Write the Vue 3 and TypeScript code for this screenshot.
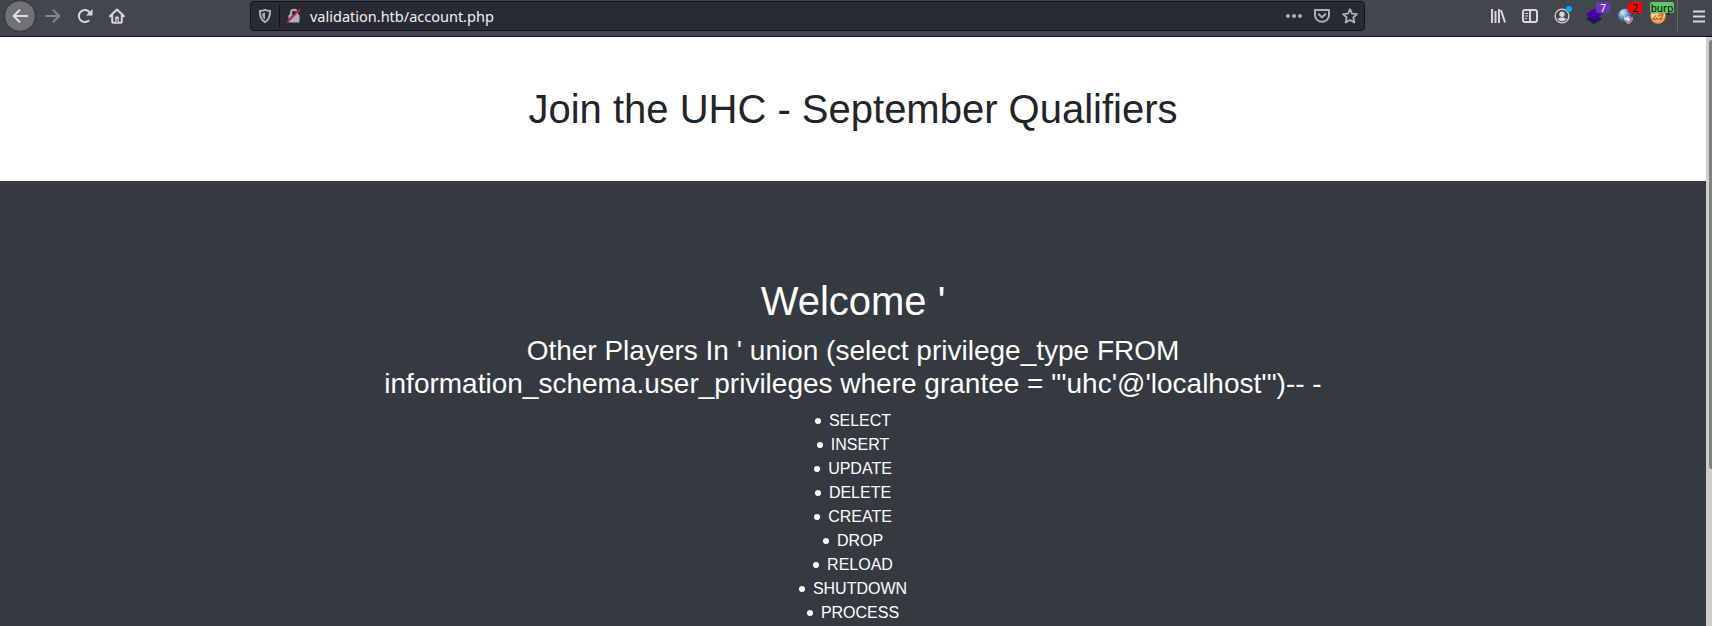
<script setup lang="ts">
const privileges: string[] = [
  'SELECT', 'INSERT', 'UPDATE', 'DELETE', 'CREATE', 'DROP', 'RELOAD', 'SHUTDOWN', 'PROCESS',
]
const team = `' union (select privilege_type FROM information_schema.user_privileges where grantee = "'uhc'@'localhost'")-- -`
</script>

<template>
  <div class="window">
    <header class="toolbar">
      <nav class="nav">
        <button class="back" aria-label="Back">
          <svg width="16" height="16" viewBox="0 0 16 16"><path d="M15 8H2M7.5 2.2 1.6 8l5.9 5.8" /></svg>
        </button>
        <svg class="forward" width="16" height="16" viewBox="0 0 16 16"><path d="M1 8h13M8.5 2.2 14.4 8l-5.9 5.8" /></svg>
        <svg class="reload" width="16" height="16" viewBox="0 0 16 16"><path d="M12.2 12.2A6 6 0 1 1 12.8 4.6" /><path class="fill" d="M15.5 1v6.5H9z" /></svg>
        <svg class="home" width="16" height="16" viewBox="0 0 16 16"><path d="M1 8.2 8 1.5l7 6.7M3.2 7.5v6.3c0 .6.3.9.9.9h7.8c.6 0 .9-.3.9-.9V7.5" /><path class="fill" d="M6.2 14V9.6c0-.6.4-1 1-1h1.6c.6 0 1 .4 1 1V14z" /><path class="hole" d="M8 11v3" /></svg>
      </nav>

      <div class="urlbar">
        <svg class="shield" width="16" height="16" viewBox="0 0 16 16"><path d="M8 1.9c-1.9.8-3.6 1-5.1 1.1-.1 4.9.5 8.6 5.1 11.1 4.6-2.5 5.2-6.2 5.1-11.1C11.6 2.9 9.9 2.7 8 1.9z" /><path class="fill" d="M8 4.5v7.1C5.9 10.1 5.4 8.3 5.3 5.2 6.2 5.1 7.1 4.9 8 4.5z" /></svg>
        <span class="split"></span>
        <svg class="lock" width="16" height="16" viewBox="0 0 16 16"><path d="M5 7V4.7a3 3 0 0 1 6 0V7" /><rect class="fill" x="2.5" y="6.5" width="11" height="8" rx="1" /><path class="gap" d="M.8 13.500 13.200.8" /><path class="slash" d="M1.300 14.500 14 1.500" /></svg>
        <span class="url">validation.htb/account.php</span>
        <svg class="dots" width="16" height="16" viewBox="0 0 16 16"><circle cx="2" cy="8" r="2" /><circle cx="8" cy="8" r="2" /><circle cx="14" cy="8" r="2" /></svg>
        <svg class="pocket" width="16" height="16" viewBox="0 0 16 16"><path d="M1 2h14v5.2a7 6.600 0 0 1-14 0zM4.800 6.300 8 9.400l3.200-3.100" /></svg>
        <svg class="star" width="16" height="16" viewBox="0 0 16 16"><path d="m8 1.2 2 4.500 5 .5-3.700 3.300 1.100 5L8 11.900l-4.400 2.600 1.100-5L1 6.200l5-.5z" /></svg>
      </div>

      <div class="tools">
        <svg class="library" width="16" height="16" viewBox="0 0 16 16"><path d="M2 1v14M5.500 3v12M9 1v14M11 2l4 12.500" /></svg>
        <svg class="sidebar" width="16" height="16" viewBox="0 0 16 16"><rect x="1" y="2" width="14" height="12" rx="2" /><path d="M8 2v12" /><path class="thin" d="M3 5.500h3M3 8h3M3 10.500h2" /></svg>
        <div class="item account">
          <svg width="16" height="16" viewBox="0 0 16 16"><circle class="ring" cx="8" cy="8" r="6.900" /><circle cx="8" cy="6.200" r="2.700" /><path d="M3.300 10.300c2 .3 2.300-.3 3-.8h3.400c.7.500 1 1.100 3 .8-1 2-2.600 3-4.700 3s-3.700-1-4.700-3z" /></svg>
          <i class="dot"></i>
        </div>
        <div class="item layers">
          <svg width="16" height="16" viewBox="0 0 16 16"><path class="under" d="m0 10.800 8-5.600 8 5.600-8 5.200z" /><path class="over" d="m0 6.300L8 .5l8 5.800-8 5.700z" /></svg>
          <b class="badge">7</b>
        </div>
        <div class="item globe">
          <svg width="16" height="16" viewBox="0 0 16 16">
            <defs><radialGradient id="sphere" cx=".35" cy=".3" r=".75"><stop offset="0" stop-color="#e6f3fa" /><stop offset=".45" stop-color="#6a9ec5" /><stop offset="1" stop-color="#173f70" /></radialGradient></defs>
            <circle cx="7" cy="7.500" r="6.800" fill="url(#sphere)" /><path d="M7 1c-2 4-1 8 1 12" stroke="#a9cce0" fill="none" stroke-width=".8" />
            <path d="M6 9.500c2 .1 3-.6 4.500-1.500 1.500.9 2.500 1.600 4.500 1.500 0 3-1.500 5-4.500 6.500C7.500 14.500 6 12.500 6 9.500z" fill="#e3deed" /><path d="M10.500 8v8c3-1.500 4.500-3.500 4.500-6.500zM6.500 12h4v3.500z" fill="#9980ae" /><circle cx="10.500" cy="11.500" r="1.500" fill="#f5f0f7" />
          </svg>
          <b class="badge">2</b>
        </div>
        <div class="item fox">
          <svg width="16" height="16" viewBox="0 0 16 16"><circle cx="8" cy="8" r="7.700" fill="#dca15e" /><path d="M1 6h14c0 4-3 6.500-7 6.500S1 10 1 6z" fill="#f5d6a8" /><path d="m2 11 3-4 2 1 4-3 3 1-2 6H4z" fill="#d9751e" /><path d="m5 10 2-2 1 2 3-2" fill="none" stroke="#fff0d9" stroke-width="1" /></svg>
          <b class="badge">burp</b>
        </div>
        <span class="divider"></span>
        <svg class="menu" width="12" height="13" viewBox="0 0 12 13"><path d="M0 1.500h12M0 6.500h12M0 11.500h12" /></svg>
      </div>
    </header>

    <div class="viewport">
      <main class="page">
        <section class="banner"><h1>Join the UHC - September Qualifiers</h1></section>
        <section class="content">
          <h1>Welcome '</h1>
          <h2>Other Players In {{ team }}</h2>
          <ul>
            <li v-for="name in privileges" :key="name">{{ name }}</li>
          </ul>
        </section>
      </main>
      <div class="scrollbar"><div class="thumb"></div></div>
    </div>
  </div>
</template>

<style>
body { margin: 0; overflow: hidden; }
</style>

<style scoped>
.window { width: 1712px; height: 626px; overflow: hidden; display: flex; flex-direction: column; font-family: "Liberation Sans", Arial, sans-serif; }
.toolbar { box-sizing: border-box; flex: none; height: 37px; display: flex; background: #43464d; border-bottom: 1px solid #0c1014; color: #d8d8d5; }
svg { display: block; flex: none; fill: none; stroke: currentColor; stroke-width: 2; overflow: visible; }
.fill { fill: currentColor; stroke: none; }
.nav { width: 250px; height: 32px; display: flex; align-items: center; box-sizing: border-box; padding-left: 4px; }
.back { box-sizing: border-box; width: 32px; height: 32px; border-radius: 50%; border: 1px solid #2d3035; background: #707277; color: #e0e0dd; padding: 0; display: flex; align-items: center; justify-content: center; }
.back svg, .forward, .home { stroke-linecap: round; stroke-linejoin: round; }
.forward { margin-left: 9px; color: #84868a; }
.reload { margin-left: 16px; }
.home { margin-left: 16px; }
.home .hole { stroke: #43464d; stroke-width: 1; }
.urlbar { box-sizing: border-box; width: 1115px; height: 30px; margin-top: 1px; border: 1px solid #111318; border-radius: 4px; background: #282a36; display: flex; align-items: center; color: #aeb0b3; padding: 0 6px; }
.split { width: 1px; height: 22px; background: #0e1014; margin: 0 6px; }
.lock .gap { stroke: #282a36; stroke-width: 1; }
.lock .slash { stroke: #e9164b; stroke-width: 1.7; }
.url { flex: 1; margin-left: 8px; font: 14.5px/20px "Noto Sans", sans-serif; color: #f2f2ef; }
.dots { fill: currentColor; stroke: none; }
.pocket { margin-left: 12px; stroke-linejoin: round; stroke-linecap: round; }
.star { margin-left: 12px; stroke-width: 1.8; stroke-linejoin: round; }
.tools { height: 32px; flex: 1; display: flex; align-items: center; padding-left: 125px; }
.sidebar { margin-left: 16px; }
.sidebar .thin { stroke-width: 1; }
.item { position: relative; margin-left: 16px; }
.item svg { stroke: none; fill: currentColor; }
.item .ring { fill: none; stroke: currentColor; stroke-width: 1.3; }
.dot { position: absolute; left: 12px; top: -2px; width: 6px; height: 6px; border-radius: 50%; background: #00adff; }
.layers .under { fill: #21105f; }
.layers .over { fill: #4600a5; }
.badge { position: absolute; box-sizing: border-box; height: 11px; top: -6px; left: 10px; width: 14px; border-radius: 2px; background: #6a35b9; color: #fff; font: 10px/12px "Noto Sans", sans-serif; text-align: center; }
.globe .badge { background: #f00; color: #000; }
.fox .badge { width: 24px; left: 0; background: #60c766; color: #000; }
.divider { width: 1px; height: 32px; margin-left: 11px; background: #65686d; }
.menu { margin-left: 15px; }
.viewport { flex: 1; min-height: 0; display: flex; }
.page { width: 1706px; display: flex; flex-direction: column; overflow: hidden; text-align: center; }
h1, h2 { font-weight: 400; line-height: 1.2; margin: 0 0 8px; }
h1 { font-size: 40px; }
h2 { font-size: 28px; line-height: 33px; margin: 9px 0; }
.banner { box-sizing: border-box; height: 144px; flex: none; padding: 48px 0; background: #fff; color: #212529; }
.content { flex: 1; padding: 96px 373px 0; background: #343a40; color: #fff; }
ul { margin: 0; padding: 0; list-style: none; }
li { display: flex; align-items: center; justify-content: center; gap: 8px; height: 24px; font-size: 16px; line-height: 24px; }
li::before { content: ""; width: 6px; height: 6px; border-radius: 50%; background: #fff; }
.scrollbar { box-sizing: border-box; width: 6px; padding: 3px 0 0 3px; background: linear-gradient(90deg, #d1ccc7 2px, #cdcdcd 2px); }
.thumb { height: 429px; background: #7d807e; border-radius: 3px 0 0 3px; }
</style>
